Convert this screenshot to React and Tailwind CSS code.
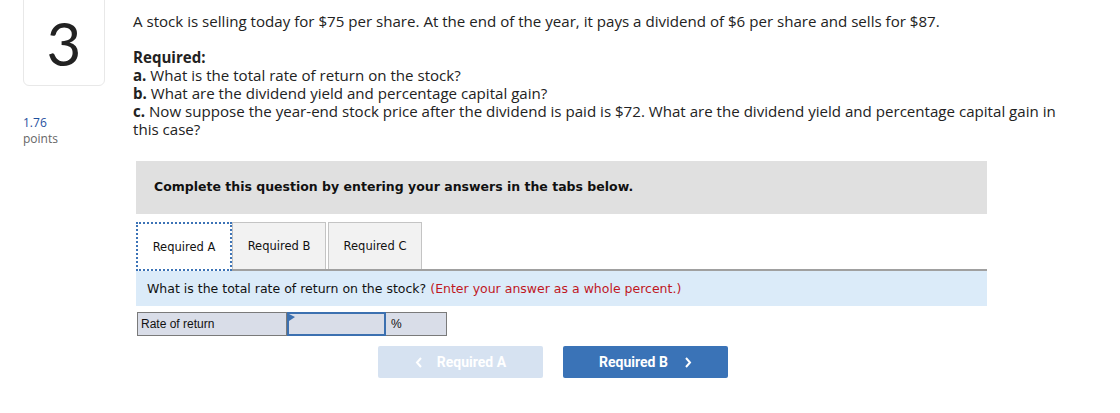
import React from 'react';

const sans = { fontFamily: '"Open Sans", "Liberation Sans", sans-serif' };

export default function App() {
  return (
    <div className="w-[1120px] h-[413px] bg-white text-[#222] relative flex" style={sans}>
      {/* Left column: question number + points */}
      <div className="w-[133px] shrink-0 pl-[23px]">
        <div className="w-[82px] h-[87px] -mt-[1px] border border-[#e8e8e8] rounded-b-[6px] flex items-center justify-center">
          <span className="text-[60px] leading-none font-normal text-[#222]" style={{ fontFamily: 'Lato, sans-serif' }}>3</span>
        </div>
        <div className="mt-[28px] text-[12px] leading-[17px] text-[#1f4f9e]">1.76</div>
        <div className="text-[12px] leading-[15px] text-[#666]">points</div>
      </div>

      {/* Main column */}
      <div className="flex-1 pt-[12px]">
        <p className="text-[15.1px] leading-[18px] text-[#222]">
          A stock is selling today for $75 per share. At the end of the year, it pays a dividend of $6 per share and sells for $87.
        </p>
        <div className="mt-[18px] text-[15.1px] leading-[18px] w-[935px]">
          <div className="font-bold">Required:</div>
          <div><span className="font-bold">a.</span> What is the total rate of return on the stock?</div>
          <div><span className="font-bold">b.</span> What are the dividend yield and percentage capital gain?</div>
          <div><span className="font-bold">c.</span> Now suppose the year-end stock price after the dividend is paid is $72. What are the dividend yield and percentage capital gain in this case?</div>
        </div>

        {/* Instruction box */}
        <div className="mt-[23px] ml-[3px] w-[851px] h-[53px] bg-[#e0e0e0] flex items-center pl-[18px]" style={{ fontFamily: '"DejaVu Sans", Verdana, sans-serif' }}>
          <span className="text-[12.5px] font-bold text-[#111]">Complete this question by entering your answers in the tabs below.</span>
        </div>

        {/* Tabs */}
        <div className="mt-[9px] ml-[3px] w-[851px]" style={{ fontFamily: '"DejaVu Sans", Verdana, sans-serif' }}>
          <div className="flex items-end h-[48px] border-b-2 border-[#a0a0a0]">
            <div className="w-[96px] h-[49px] -mb-[2px] bg-white border-2 border-dotted border-[#3c73b6] flex items-center justify-center pt-[2px] text-[11.5px] text-[#111] relative z-10">
              Required A
            </div>
            <div className="w-[94px] h-[47px] bg-[#f2f2f2] border border-[#c4c4c4] border-b-0 flex items-center justify-center pt-[2px] text-[11.5px] text-[#111]">
              Required B
            </div>
            <div className="w-[94px] h-[47px] ml-[2px] bg-[#f2f2f2] border border-[#c4c4c4] border-b-0 flex items-center justify-center pt-[2px] text-[11.5px] text-[#111]">
              Required C
            </div>
          </div>
          <div className="h-[35px] bg-[#dbebf9] flex items-center pl-[11px] pt-[2px] text-[12.5px]">
            <span className="text-[#111]">What is the total rate of return on the stock?</span>
            <span className="text-[#c0171f] ml-[4px]">(Enter your answer as a whole percent.)</span>
          </div>
        </div>

        {/* Answer row */}
        <div className="mt-[6px] ml-[4px] flex h-[24px] text-[12px]" style={{ fontFamily: '"Liberation Sans", Arial, sans-serif' }}>
          <div className="w-[150px] bg-[#d9dde8] border border-[#7a7a7a] flex items-center pl-[3px] text-[#111]">Rate of return</div>
          <div className="w-[99px] bg-[#d9dde8] border-2 border-[#3c70b0] relative">
            <svg className="absolute left-0 top-0" width="6" height="7" viewBox="0 0 6 7">
              <path d="M0 0 L6 3 L0 7 Z" fill="#3c70b0" />
            </svg>
          </div>
          <div className="w-[61px] bg-[#d9dde8] border border-[#7a7a7a] border-l-0 flex items-center pl-[5px] text-[#111]">%</div>
        </div>

        {/* Nav buttons */}
        <div className="mt-[10px] ml-[245px] flex gap-[20px]" style={{ fontFamily: 'Roboto, "Liberation Sans", sans-serif' }}>
          <button className="w-[165px] h-[32px] bg-[#d6e2f1] rounded-[2px] text-white text-[14px] font-bold flex items-center justify-center gap-[14px]">
            <svg width="8" height="11" viewBox="0 0 8 11"><path d="M6 1 L2 5.5 L6 10" stroke="white" strokeWidth="2" fill="none" /></svg>
            <span>Required A</span>
          </button>
          <button className="w-[165px] h-[32px] bg-[#3a73b7] rounded-[2px] text-white text-[14px] font-bold flex items-center justify-center gap-[16px]">
            <span>Required B</span>
            <svg width="8" height="11" viewBox="0 0 8 11"><path d="M2 1 L6 5.5 L2 10" stroke="white" strokeWidth="2" fill="none" /></svg>
          </button>
        </div>
      </div>
    </div>
  );
}
